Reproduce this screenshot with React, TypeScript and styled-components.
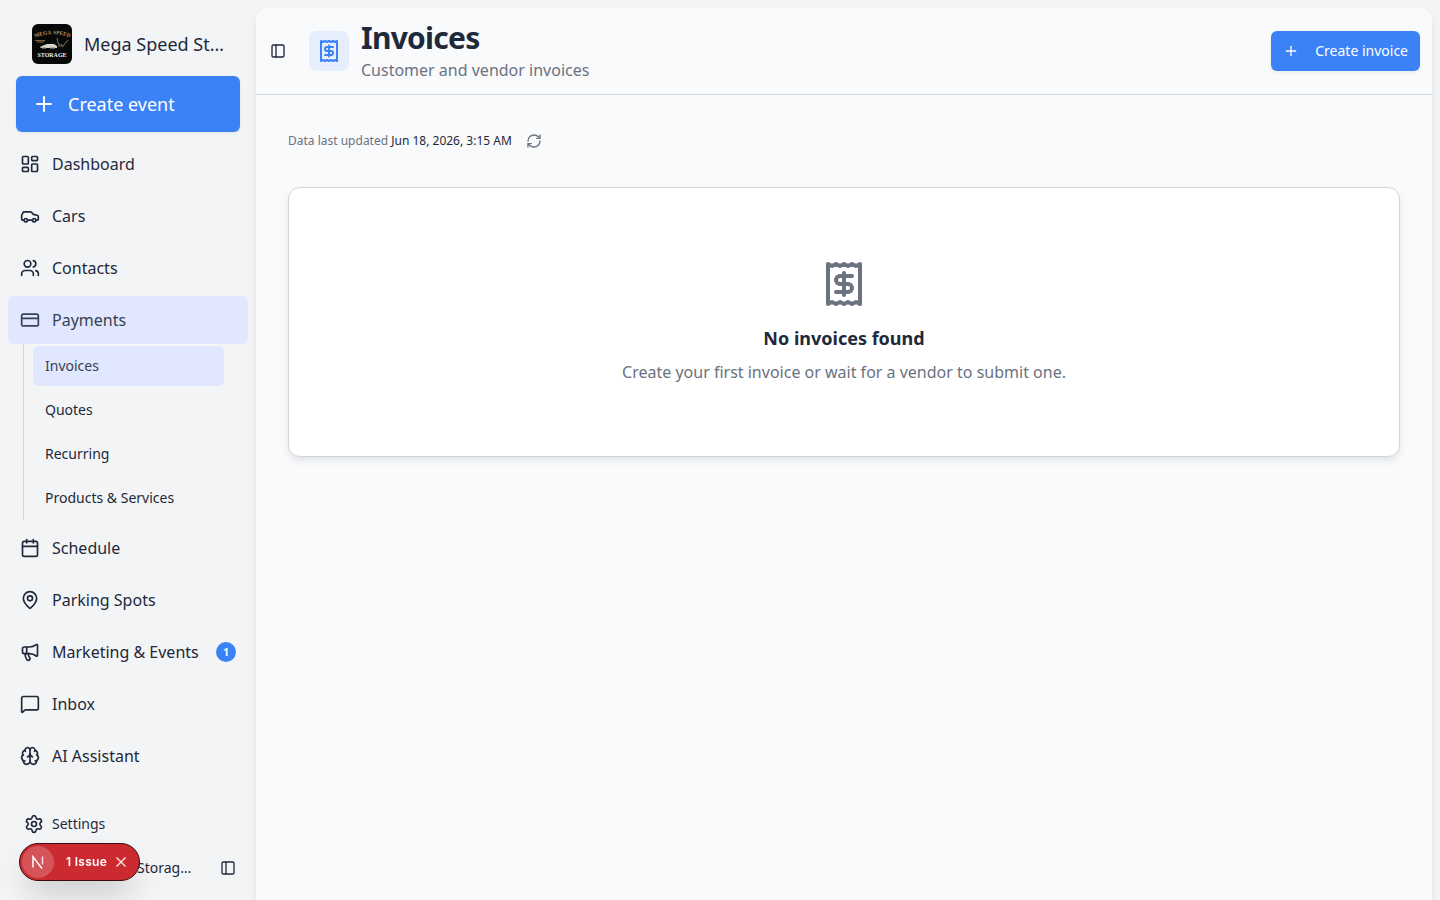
import React from 'react';
import styled, { createGlobalStyle, css } from 'styled-components';
import {
  LayoutDashboard,
  Car,
  Users,
  CreditCard,
  Calendar,
  MapPin,
  Megaphone,
  MessageSquare,
  Brain,
  Settings,
  PanelLeft,
  Plus,
  RefreshCw,
} from 'lucide-react';

const color = {
  shell: '#f3f4f6',
  page: '#f9fafc',
  text: '#1e293b',
  muted: '#6b7280',
  primary: '#3b82f6',
  accent: '#e0e7ff',
  accentText: '#374151',
  border: '#d1d5db',
};

const shadow = '0 4px 8px -1px rgba(0,0,0,0.1), 0 1px 2px -2px rgba(0,0,0,0.1)';

const GlobalStyle = createGlobalStyle`
  *, *::before, *::after { box-sizing: border-box; }
  body {
    margin: 0;
    background: ${color.shell};
    color: ${color.text};
    font-family: "Noto Sans", sans-serif;
    font-size: 16px;
    line-height: 24px;
  }
  button { font: inherit; color: inherit; border: 0; background: none; padding: 0; margin: 0; cursor: pointer; }
  h1, h2, p, ul { margin: 0; padding: 0; }
  ul { list-style: none; }
  a { color: inherit; text-decoration: none; }
  svg { display: block; flex-shrink: 0; }
`;

const Shell = styled.div`
  display: flex;
  height: 900px;
  overflow: hidden;
`;

const Sidebar = styled.aside`
  width: 256px;
  flex-shrink: 0;
  display: flex;
  flex-direction: column;
  padding: 24px 8px 12px;
`;

const Brand = styled.div`
  display: flex;
  align-items: center;
  gap: 12px;
  height: 40px;
  padding: 0 24px;
  font-size: 18px;
  line-height: 28px;
`;

const Truncated = styled.span`
  min-width: 0;
  overflow: hidden;
  text-overflow: ellipsis;
  white-space: nowrap;
`;

const CreateEvent = styled.button`
  display: flex;
  align-items: center;
  gap: 12px;
  height: 56px;
  margin: 12px 8px 8px;
  padding: 0 16px;
  border-radius: 6px;
  background: ${color.primary};
  color: #fff;
  font-size: 18px;
  box-shadow: 0 1px 3px rgba(0, 0, 0, 0.08);
`;

const Nav = styled.ul`
  display: flex;
  flex-direction: column;
  gap: 4px;
  flex: 1;
`;

const NavLink = styled.a<{ $active?: boolean }>`
  display: flex;
  align-items: center;
  gap: 12px;
  height: 48px;
  padding: 0 12px;
  border-radius: 6px;
  white-space: nowrap;
  ${({ $active }) => $active && css`
    background: ${color.accent};
    color: ${color.accentText};
  `}
`;

const Count = styled.span`
  display: flex;
  align-items: center;
  justify-content: center;
  width: 20px;
  height: 20px;
  margin-left: auto;
  border-radius: 50%;
  background: ${color.primary};
  color: #fff;
  font-size: 10px;
  font-weight: 700;
`;

const SubNav = styled.ul`
  display: flex;
  flex-direction: column;
  gap: 4px;
  margin: 0 24px 0 15px;
  padding: 2px 0 2px 9px;
  border-left: 1px solid ${color.border};
`;

const SubLink = styled.a<{ $active?: boolean }>`
  display: flex;
  align-items: center;
  height: 40px;
  padding: 0 12px;
  border-radius: 6px;
  font-size: 14px;
  ${({ $active }) => $active && css`
    background: ${color.accent};
    color: ${color.accentText};
  `}
`;

const Footer = styled.div`
  display: flex;
  flex-direction: column;
  gap: 4px;
  font-size: 14px;
`;

const FooterRow = styled.div`
  display: flex;
  align-items: center;
  gap: 8px;
  height: 40px;
  padding: 0 12px 0 16px;
`;

const Avatar = styled.div`
  width: 20px;
  height: 20px;
  flex-shrink: 0;
  overflow: hidden;
  border-radius: 4px;
`;

const AccountName = styled(Truncated)`
  width: 144px;
  margin-right: auto;
`;

const Main = styled.main`
  flex: 1;
  min-width: 0;
  margin: 8px 8px 0 0;
  border-radius: 12px 12px 0 0;
  background: ${color.page};
  box-shadow: ${shadow};
`;

const Header = styled.header`
  display: flex;
  align-items: center;
  height: 87px;
  padding: 0 12px 0 14px;
  border-bottom: 1px solid ${color.border};
`;

const IconTile = styled.div`
  display: flex;
  align-items: center;
  justify-content: center;
  width: 40px;
  height: 40px;
  margin: 0 12px 0 23px;
  border-radius: 8px;
  background: #e6edfc;
  color: ${color.primary};
`;

const Heading = styled.div`
  display: flex;
  flex-direction: column;
  gap: 2px;
  margin-right: auto;
`;

const Title = styled.h1`
  font-size: 30px;
  line-height: 36px;
  font-weight: 700;
  letter-spacing: -0.75px;
`;

const Subtitle = styled.p`
  color: ${color.muted};
`;

const CreateInvoice = styled.button`
  display: flex;
  align-items: center;
  gap: 16px;
  height: 40px;
  padding: 0 12px;
  border-radius: 6px;
  background: ${color.primary};
  color: #fff;
  font-size: 14px;
  box-shadow: 0 2px 4px rgba(0, 0, 0, 0.06);
`;

const Content = styled.section`
  padding: 32px;
`;

const Updated = styled.div`
  display: flex;
  align-items: center;
  gap: 14px;
  height: 28px;
  margin-bottom: 32px;
  color: ${color.muted};
  font-size: 12px;
`;

const Timestamp = styled.span`
  color: ${color.text};
`;

const EmptyCard = styled.div`
  display: flex;
  flex-direction: column;
  align-items: center;
  height: 270px;
  padding-top: 72px;
  border: 1px solid ${color.border};
  border-radius: 12px;
  background: #fff;
  color: ${color.muted};
  box-shadow: ${shadow};
`;

const EmptyTitle = styled.h2`
  margin: 16px 0 8px;
  color: ${color.text};
  font-size: 18px;
  line-height: 28px;
  font-weight: 700;
`;

const IssueToast = styled.div`
  position: fixed;
  left: 19px;
  bottom: 19px;
  display: flex;
  align-items: center;
  width: 121px;
  height: 38px;
  padding: 0 12px 0 2px;
  border: 1px solid #3d0a0d;
  border-radius: 19px;
  background: #ca2a30;
  color: #fff;
  font-family: Inter, sans-serif;
  font-size: 12px;
  font-weight: 600;
  white-space: nowrap;
  box-shadow: 0 16px 32px -8px rgba(0, 0, 0, 0.24);
`;

const IssueMark = styled.div`
  display: flex;
  align-items: center;
  justify-content: center;
  width: 32px;
  height: 32px;
  margin-right: 12px;
  border-radius: 50%;
  background: rgba(255, 255, 255, 0.2);
`;

const IssueText = styled.span`
  margin-right: auto;
  letter-spacing: 0.3px;
`;

function Logo({ size }: { size: number }) {
  return (
    <svg width={size} height={size} viewBox="0 0 40 40">
      <rect width="40" height="40" rx="6" fill="#070908" />
      <path id="logo-arc" d="M3 13.500Q20 7 38 13.500" fill="none" />
      <text fill="#b89565" fontFamily="Liberation Serif, serif" fontWeight="700" fontSize="5.400" wordSpacing="0.500">
        <textPath href="#logo-arc">MEGA SPEED</textPath>
      </text>
      <path d="M3 16.500h10M5 18h7" stroke="#806442" strokeWidth="1" />
      <path d="M8 23l3-1.500 4-1.500h7l3 2v2H9z" fill="#d5d2cb" />
      <path d="M10 24.200h4M18 24.200h5" stroke="#777" strokeWidth="1.200" />
      <path d="M25 14l1 5 2 2M26 22h5l5-6M29 20l2 3" stroke="#78664d" strokeWidth="1.100" fill="none" />
      <text x="5.500" y="32.800" textLength="29" lengthAdjust="spacingAndGlyphs" fill="#eeeeea" fontFamily="Liberation Serif, serif" fontWeight="700" fontSize="6.800">STORAGE</text>
    </svg>
  );
}

function ReceiptIcon({ size }: { size: number }) {
  return (
    <svg width={size} height={size} viewBox="0 0 24 24" fill="none" stroke="currentColor" strokeWidth="2" strokeLinecap="round" strokeLinejoin="round">
      <path d="M4 2v20l2-1 2 1 2-1 2 1 2-1 2 1 2-1 2 1V2l-2 1-2-1-2 1-2-1-2 1-2-1-2 1Z" />
      <path d="M16 8h-6a2 2 0 1 0 0 4h4a2 2 0 1 1 0 4H8" />
      <path d="M12 17.500v-11" />
    </svg>
  );
}

const subItems = ['Invoices', 'Quotes', 'Recurring', 'Products & Services'];

export default function App() {
  return (
    <>
      <GlobalStyle />
      <Shell>
        <Sidebar>
          <Brand>
            <Logo size={40} />
            <Truncated>Mega Speed Storage</Truncated>
          </Brand>
          <CreateEvent><Plus size={24} />Create event</CreateEvent>
          <Nav>
            <li><NavLink href="#"><LayoutDashboard size={20} />Dashboard</NavLink></li>
            <li><NavLink href="#"><Car size={20} />Cars</NavLink></li>
            <li><NavLink href="#"><Users size={20} />Contacts</NavLink></li>
            <li>
              <NavLink href="#" $active><CreditCard size={20} />Payments</NavLink>
              <SubNav>
                {subItems.map((item, i) => (
                  <li key={item}><SubLink href="#" $active={i === 0}>{item}</SubLink></li>
                ))}
              </SubNav>
            </li>
            <li><NavLink href="#"><Calendar size={20} />Schedule</NavLink></li>
            <li><NavLink href="#"><MapPin size={20} />Parking Spots</NavLink></li>
            <li><NavLink href="#"><Megaphone size={20} />Marketing &amp; Events<Count>1</Count></NavLink></li>
            <li><NavLink href="#"><MessageSquare size={20} />Inbox</NavLink></li>
            <li><NavLink href="#"><Brain size={20} />AI Assistant</NavLink></li>
          </Nav>
          <Footer>
            <FooterRow><Settings size={20} />Settings</FooterRow>
            <FooterRow>
              <Avatar />
              <AccountName>Mega Speed Storage Admin</AccountName>
              <PanelLeft size={16} />
            </FooterRow>
          </Footer>
        </Sidebar>
        <Main>
          <Header>
            <PanelLeft size={16} />
            <IconTile><ReceiptIcon size={24} /></IconTile>
            <Heading>
              <Title>Invoices</Title>
              <Subtitle>Customer and vendor invoices</Subtitle>
            </Heading>
            <CreateInvoice><Plus size={16} />Create invoice</CreateInvoice>
          </Header>
          <Content>
            <Updated>
              <span>Data last updated <Timestamp>Jun 18, 2026, 3:15 AM</Timestamp></span>
              <RefreshCw size={16} />
            </Updated>
            <EmptyCard>
              <ReceiptIcon size={48} />
              <EmptyTitle>No invoices found</EmptyTitle>
              <p>Create your first invoice or wait for a vendor to submit one.</p>
            </EmptyCard>
          </Content>
        </Main>
      </Shell>
      <IssueToast>
        <IssueMark>
          <svg width="14" height="14" viewBox="0 0 14 14" fill="none" stroke="#fff" strokeWidth="1.500">
            <path d="M2 12.500V1.800L11 13.500" />
            <path d="M11.500 1.500v8" opacity="0.8" />
          </svg>
        </IssueMark>
        <IssueText>1 Issue</IssueText>
        <svg width="12" height="12" viewBox="0 0 12 12" fill="none" stroke="#fff" strokeWidth="1.300" opacity="0.9">
          <path d="M1.500 1.500l9 9M10.500 1.500l-9 9" />
        </svg>
      </IssueToast>
    </>
  );
}
